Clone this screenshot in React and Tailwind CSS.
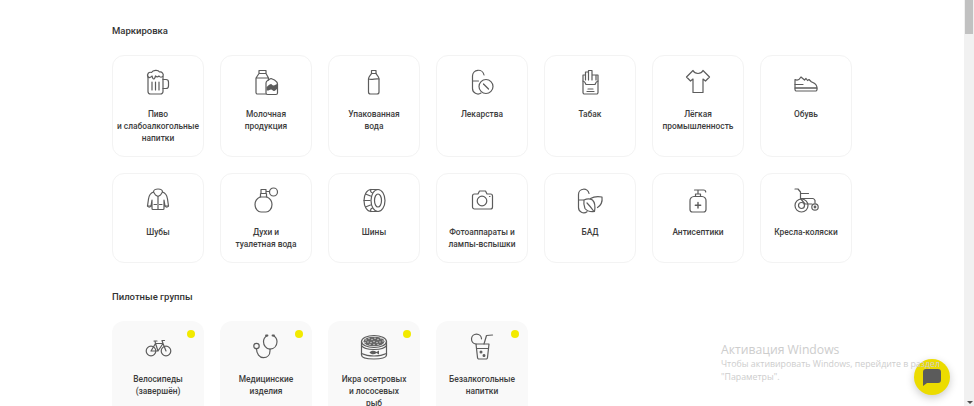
const Icon = ({ children }) => (
  <svg width="32" height="32" viewBox="0 0 32 32" fill="none" stroke="#5c5c5c" strokeWidth="1.2" strokeLinecap="round" strokeLinejoin="round" className="shrink-0">
    {children}
  </svg>
);

const Beer = () => (
  <Icon>
    <path d="M6 10v15.500a2.500 2.500 0 0 0 2.500 2.500h10a2.500 2.500 0 0 0 2.500-2.500V10" />
    <path d="M6 11c-1.500-3 1-5.500 3.500-4.500C11 4 16 3.500 17.500 6c2.500-.5 4.500 2 3.500 4-1 1.500-3 1.500-4 0-1 1-2.500 1-3.500 0-.5 2-1 3-2 3s-1-2-1.500-3c-1 1.500-3 2-4 1z" />
    <path d="M21 13.500h3a2.500 2.500 0 0 1 2.500 2.500v4a2.500 2.500 0 0 1-2.500 2.500h-3" />
    <path d="M10 16v8M13.500 16v8M17 16v8" />
  </Icon>
);
const Milk = () => (
  <Icon>
    <path d="M9 4.500h7v3H9zM9 7.500 6 12v14.500a1.500 1.500 0 0 0 1.500 1.500H16M16 7.500l2.500 4.500v2M6 12h12.500" />
    <path d="M16 17c0-2 2-2.500 3-3.500l2-1 3.500 1.500c1.500 1 3 2 3 4v9a1.500 1.500 0 0 1-1.500 1.500H17.500A1.500 1.500 0 0 1 16 27z" />
    <path d="M16.500 21c1.500-.5 2.500-3 4.500-3 1 0 1 1.500 2.500 1.500s2.500-1.500 4-1.500v5c-1.500 0-2 2-3.500 2s-1.500-1.500-3-1.500-2 1.500-4.500 1z" fill="#5c5c5c" stroke="none" />
  </Icon>
);
const Bottle = () => (
  <Icon>
    <path d="M13.500 4.500h4.500v3h-4.500z" />
    <path d="M13.500 7.500c-1 2-3 3-3 5.500v13a2 2 0 0 0 2 2h6.500a2 2 0 0 0 2-2V13c0-2.500-2-3.500-3-5.500" />
    <path d="M10.500 13c3.500 1.500 7-1 10.500 0" />
  </Icon>
);
const Pill = () => (
  <Icon>
    <path d="M6.500 15V10a5.800 5.800 0 0 1 11.500-1M6.500 15v7.500a5.500 5.500 0 0 0 8.500 4.600M6.500 15h6" />
    <circle cx="20" cy="20.500" r="7" />
    <path d="m17.500 18 5 5" />
  </Icon>
);
const Tobacco = () => (
  <Icon>
    <path d="M9 15v11.500A1.500 1.500 0 0 0 10.500 28h12a1.500 1.500 0 0 0 1.500-1.500V15" />
    <path d="M9 15V9h2.500M24 15V9h-1.500M9 15c2 .5 2.500 2 3 3.500h9c.5-1.500 1-3 3-3.500" />
    <path d="M11.500 14V6h3v8M14.500 12V4.500h3.500V14M18 9h4v5" />
    <path d="M14 23h5M13 25.500h7" />
  </Icon>
);
const Shirt = () => (
  <Icon>
    <path d="M11 4.500 4.500 11l4 4 2.500-2v13.500h10V13l2.500 2 4-4L21 4.500c-1 2-3 3-5 3s-4-1-5-3z" />
  </Icon>
);
const Shoe = () => (
  <Icon>
    <path d="M5 22v-8.500c2 1 4 1 6-2.500l3.500 3 1.500-1.500 1.500 2 1.500-1 2 2c2 1.500 6 1.500 6 6.500z" />
    <path d="M5 22h22v1.500a1.500 1.500 0 0 1-1.500 1.500h-19A1.500 1.500 0 0 1 5 23.500zM5 18.500h8" />
  </Icon>
);
const Coat = () => (
  <Icon>
    <path d="M11.500 8c-3 1-4.500 3-5 7l-1 7h3.500l1-6v8.500c0 .5.500 1 1 1h10c.500 0 1-.5 1-1V16l1 6h3.500l-1-7c-.5-4-2-6-5-7" />
    <path d="M11.500 8c0-4 9-4 9 0l-2 3-2.500 1.500-2.500-1.500zM16 12.500v12.500M12 20.500h2.500M17.500 20.500H20" />
    <path d="M5.500 22c1 1.500 2.500 1.500 3.500 0M23 22c1 1.500 2.500 1.500 3.500 0" />
  </Icon>
);
const Perfume = () => (
  <Icon>
    <path d="M10 13c-3 1.500-5 4-5 7.500 0 4.500 3 7.500 6 7.500h5c3 0 6-3 6-7.500 0-3.500-2-6-5-7.500z" />
    <path d="M10.500 13V9.500h6V13M11 9.500V5.500h5v4M16 7.500h3.500" />
    <circle cx="23.500" cy="8" r="4" />
  </Icon>
);
const Tire = () => (
  <Icon>
    <ellipse cx="20" cy="16.500" rx="7" ry="11" />
    <ellipse cx="20" cy="16.500" rx="3.500" ry="6.500" />
    <path d="M20 5.500h-7c-4 0-7 5-7 11s3 11 7 11h7" />
    <path d="M13 5.500c-1 2 0 3 1.500 3.500M7.500 10l5 2M6 16.500h6M7.500 23l5-2M13 27.500c-1-2 0-3 1.500-3.500" />
  </Icon>
);
const Camera = () => (
  <Icon>
    <path d="M6.500 12a2 2 0 0 1 2-2H12l1.500-3h6l1.500 3h3.500a2 2 0 0 1 2 2v11a2 2 0 0 1-2 2h-16a2 2 0 0 1-2-2z" />
    <circle cx="16" cy="17" r="4.800" />
    <path d="M23.500 12.500h.5" />
  </Icon>
);
const Bad = () => (
  <Icon>
    <path d="M4.500 16v-5.500a5.300 5.300 0 0 1 10.500-1M4.500 16v7.500a5.300 5.300 0 0 0 8.500 4.200M4.500 16h5" />
    <path d="M10 16c3-1.500 6-1.500 8.500 0 2 2 3 6 2 11.500-4 .5-7.500-.5-9.500-3-1-2.500-1.500-5.500-1-8.500z" />
    <path d="M13 19c2 2 4.500 5 7 8.500" />
    <path d="M16.500 14.500c3-1.800 7-2.300 11.500-1.500.5 4-.5 8-4.500 10.500" />
  </Icon>
);
const Sanitizer = () => (
  <Icon>
    <path d="M8 17a4 4 0 0 1 4-4.500h8a4 4 0 0 1 4 4.500v8.500a2.500 2.500 0 0 1-2.500 2.500h-11A2.500 2.500 0 0 1 8 25.500z" />
    <path d="M13.500 12.500v-2.500h5v2.500M16 10V6M12.500 6h9c1.500 0 2.200.8 2.200 2" />
    <path d="M16 18.500v5.500M13.300 21.200h5.400" strokeWidth="1.400" />
  </Icon>
);
const Wheelchair = () => (
  <Icon>
    <path d="M5 5h3l2.500 3v6.500h12.500a3 3 0 0 1 2 2v2.500" />
    <path d="M10.500 9.500h8M10.500 14.500l4.500 5.500h7" />
    <circle cx="11.500" cy="21.500" r="6.500" />
    <circle cx="11.500" cy="21.500" r="3" />
    <circle cx="25" cy="23" r="3.200" />
    <circle cx="25" cy="23" r=".8" fill="#5c5c5c" />
  </Icon>
);
const Bike = () => (
  <Icon>
    <circle cx="9" cy="20" r="4.800" />
    <circle cx="24" cy="20" r="4.800" />
    <path d="m9 20 4.500-7.500h7.500L24 20M13.500 12.500 16 20H9M16 20l5-7.500M12 10h3M13 10l.5 2.500M21 12.500 20 9.500h2.500" />
  </Icon>
);
const Stethoscope = () => (
  <Icon>
    <circle cx="6.500" cy="15" r="2.700" />
    <path d="M6.500 17.700c0 5 3 9 7 9s6.500-3 6.500-7v-1.500" />
    <path d="M20 18.200c-4-.5-6.500-4-6.500-7.500 0-2.500 1-4.500 3.500-6M20 18.200c4-.5 7-3.500 7-7.500 0-2.500-1-4.500-3.500-6" />
    <path d="M16 4.500h1.500M22.500 4.500H24" strokeWidth="1.800" />
  </Icon>
);

const caviarDots = [
  [8, 9], [11, 7.500], [14, 8.500], [17, 7.200], [20, 8.500], [23, 7.500], [25, 10],
  [7, 11.500], [10, 11], [13, 11.500], [16, 10.500], [19, 11.500], [22, 11], [12, 13.500], [16, 13.500], [20, 13.500],
];
const Caviar = () => (
  <Icon>
    <ellipse cx="16" cy="10.500" rx="12.500" ry="6" />
    <ellipse cx="16" cy="10.500" rx="10.500" ry="4.800" fill="#666" stroke="none" />
    {caviarDots.map(([x, y]) => (
      <circle key={`${x}-${y}`} cx={x} cy={y} r=".7" fill="#ddd" stroke="none" />
    ))}
    <path d="M3.500 10.500V24c0 2.500 5.500 4 12.500 4s12.500-1.500 12.500-4V10.500" />
    <path d="M3.500 14.500c1.500 2.500 6 4 12.500 4s11-1.500 12.500-4M3.500 22.500c3 1.500 7 2.500 12.500 2.500s9.500-1 12.500-2.500" />
    <path d="M11.500 21.500c1.500-2 4.500-2.500 7-.5l2.500-1.500v4L18.500 22c-2.500 2-5.500 1.500-7-.5z" fill="#5c5c5c" stroke="none" />
  </Icon>
);
const Drink = () => (
  <Icon>
    <path d="M10 13h13l-1.500 13.500a1.500 1.500 0 0 1-1.500 1.500h-7a1.500 1.500 0 0 1-1.500-1.500z" />
    <path d="M10 13A5 5 0 1 1 15.500 7.800M10.500 17.500h12" />
    <path d="m18 13 2.500-8.500 6-.5" />
    <circle cx="15" cy="21" r=".9" fill="#5c5c5c" />
    <circle cx="18" cy="24.500" r=".9" fill="#5c5c5c" />
  </Icon>
);

const marking = [
  { icon: Beer, lines: ["Пиво", "и слабоалкогольные", "напитки"] },
  { icon: Milk, lines: ["Молочная", "продукция"] },
  { icon: Bottle, lines: ["Упакованная", "вода"] },
  { icon: Pill, lines: ["Лекарства"] },
  { icon: Tobacco, lines: ["Табак"] },
  { icon: Shirt, lines: ["Лёгкая", "промышленность"] },
  { icon: Shoe, lines: ["Обувь"] },
];

const marking2 = [
  { icon: Coat, lines: ["Шубы"] },
  { icon: Perfume, lines: ["Духи и", "туалетная вода"] },
  { icon: Tire, lines: ["Шины"] },
  { icon: Camera, lines: ["Фотоаппараты и", "лампы-вспышки"] },
  { icon: Bad, lines: ["БАД"] },
  { icon: Sanitizer, lines: ["Антисептики"] },
  { icon: Wheelchair, lines: ["Кресла-коляски"] },
];

const pilots = [
  { icon: Bike, lines: ["Велосипеды", "(завершён)"] },
  { icon: Stethoscope, lines: ["Медицинские", "изделия"] },
  { icon: Caviar, lines: ["Икра осетровых", "и лососевых", "рыб"] },
  { icon: Drink, lines: ["Безалкогольные", "напитки"] },
];

function Card({ item, height, pilot }) {
  const Ico = item.icon;
  return (
    <div className={`relative w-[92px] shrink-0 flex flex-col items-center pt-[10px] rounded-[12px] ${height} ${pilot ? "bg-[#f9f9f9]" : "bg-white border border-[#f3f3f3]"}`}>
      <Ico />
      <div className="mt-[10px] text-center text-[8.400px] leading-[12px] font-medium text-[#3d3d3d] whitespace-nowrap">
        {item.lines.map((line) => (
          <div key={line}>{line}</div>
        ))}
      </div>
      {pilot && <span className="absolute top-[9px] right-[9px] w-2 h-2 rounded-full bg-[#f2ea00]" />}
    </div>
  );
}

export default function App() {
  return (
    <div className="relative flex h-[406px] w-[974px] overflow-hidden bg-white font-['Roboto',sans-serif]">
      <main className="flex-1 pl-[112px] pt-[25px]">
        <h2 className="text-[9.500px] leading-[12px] font-medium text-[#333]">Маркировка</h2>
        <div className="mt-[18px] flex gap-4">
          {marking.map((item) => (
            <Card key={item.lines[0]} item={item} height="h-[102px]" />
          ))}
        </div>
        <div className="mt-4 flex gap-4">
          {marking2.map((item) => (
            <Card key={item.lines[0]} item={item} height="h-[90px]" />
          ))}
        </div>
        <h2 className="mt-[28px] text-[9.500px] leading-[12px] font-medium text-[#333]">Пилотные группы</h2>
        <div className="mt-[18px] flex gap-4">
          {pilots.map((item) => (
            <Card key={item.lines[0]} item={item} height="h-[102px]" pilot />
          ))}
        </div>
      </main>

      <div className="relative w-[10px] bg-[#f1f1f1]">
        <div className="mx-[1px] h-[34px] bg-[#c1c1c1]" />
        <div className="absolute bottom-[2px] left-[3px] w-0 h-0 border-x-[3px] border-x-transparent border-t-[3px] border-t-[#505050]" />
      </div>

      <button className="absolute left-[914px] top-[359px] flex h-9 w-9 items-center justify-center rounded-full bg-[#ecdc00] shadow-[0_3px_8px_rgba(0,0,0,0.2)]">
        <svg width="18" height="17" viewBox="0 0 18 17" fill="#5b5b5b">
          <path d="M3 0h12a3 3 0 0 1 3 3v8a3 3 0 0 1-3 3H4l-4 3V3a3 3 0 0 1 3-3z" />
        </svg>
      </button>

      <div className="pointer-events-none absolute left-[721px] top-[342px] font-['Open_Sans',sans-serif] text-[#cdcdcd]">
        <div className="text-[12.200px] leading-[16px]">Активация Windows</div>
        <div className="text-[8.800px] leading-[13px] whitespace-nowrap">Чтобы активировать Windows, перейдите в раздел</div>
        <div className="text-[8.800px] leading-[13px]">"Параметры".</div>
      </div>
    </div>
  );
}
